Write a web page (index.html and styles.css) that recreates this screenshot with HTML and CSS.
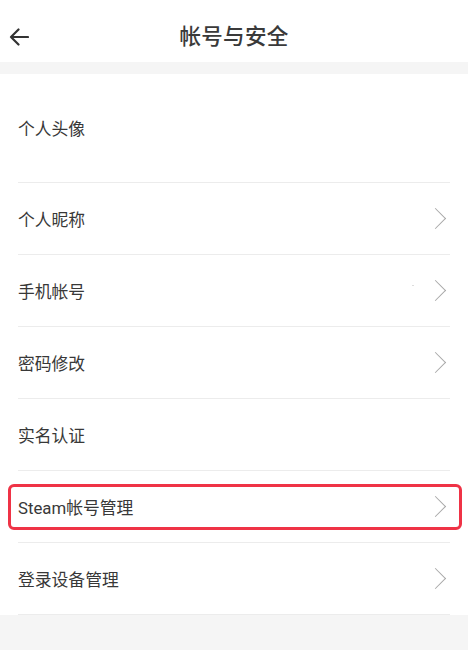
FILE: index.html
```html
<!DOCTYPE html>
<html lang="zh">
<head>
<meta charset="utf-8">
<link rel="stylesheet" href="styles.css">
</head>
<body>
<div class="page">
  <header class="topbar">
    <svg class="back" width="20" height="18" viewBox="0 0 20 18"><path d="M19 9H2M9.5 1.5L2 9l7.5 7.5" fill="none" stroke="#333" stroke-width="2.2" stroke-linecap="round" stroke-linejoin="round"/></svg>
    <h1 class="title">帐号与安全</h1>
  </header>
  <div class="band"></div>
  <ul class="list">
    <li class="row avatar"><span>个人头像</span></li>
    <li class="row"><span>个人昵称</span><i class="chev"></i></li>
    <li class="row"><span>手机帐号</span><b class="dot"></b><i class="chev"></i></li>
    <li class="row"><span>密码修改</span><i class="chev"></i></li>
    <li class="row"><span>实名认证</span></li>
    <li class="row hl"><span>Steam帐号管理</span><i class="chev"></i></li>
    <li class="row"><span>登录设备管理</span><i class="chev"></i></li>
  </ul>
  <div class="foot"></div>
</div>
</body>
</html>
```
FILE: styles.css
```css
* { box-sizing: border-box; margin: 0; padding: 0; }
body { margin: 0; background: #fff; font-family: Roboto, "Noto Sans CJK SC", sans-serif; color: #333; }
.page { width: 468px; height: 650px; display: flex; flex-direction: column; overflow: hidden; }
.topbar { height: 62px; display: flex; align-items: center; justify-content: center; position: relative; }
.back { position: absolute; left: 9px; top: 28px; }
.title { font-size: 21.5px; font-weight: 500; color: #3a3a3a; line-height: 1; margin-top: 12px; letter-spacing: 0.3px; }
.band { height: 12px; background: #f5f5f5; }
.list { list-style: none; padding: 0 18px 0 18px; }
.row { height: 72px; border-bottom: 1px solid #ececec; display: flex; align-items: center; justify-content: space-between; font-size: 16.8px; color: #383838; position: relative; }
.row span { line-height: 1; margin-top: 3px; }
.row.avatar { height: 109px; }
.chev { width: 15px; height: 15px; border-top: 1.2px solid #a8a8a8; border-right: 1.2px solid #a8a8a8; transform: rotate(45deg); margin-right: 7px; }
.dot { position: absolute; right: 36px; top: 30px; width: 2px; height: 1px; background: #ddd; }
.row.hl::after { content: ""; position: absolute; left: -10px; right: -12px; top: 13px; bottom: 12px; border: 3px solid #ef3346; border-radius: 6px; }
.foot { flex: 1; background: #f5f5f5; }
```
